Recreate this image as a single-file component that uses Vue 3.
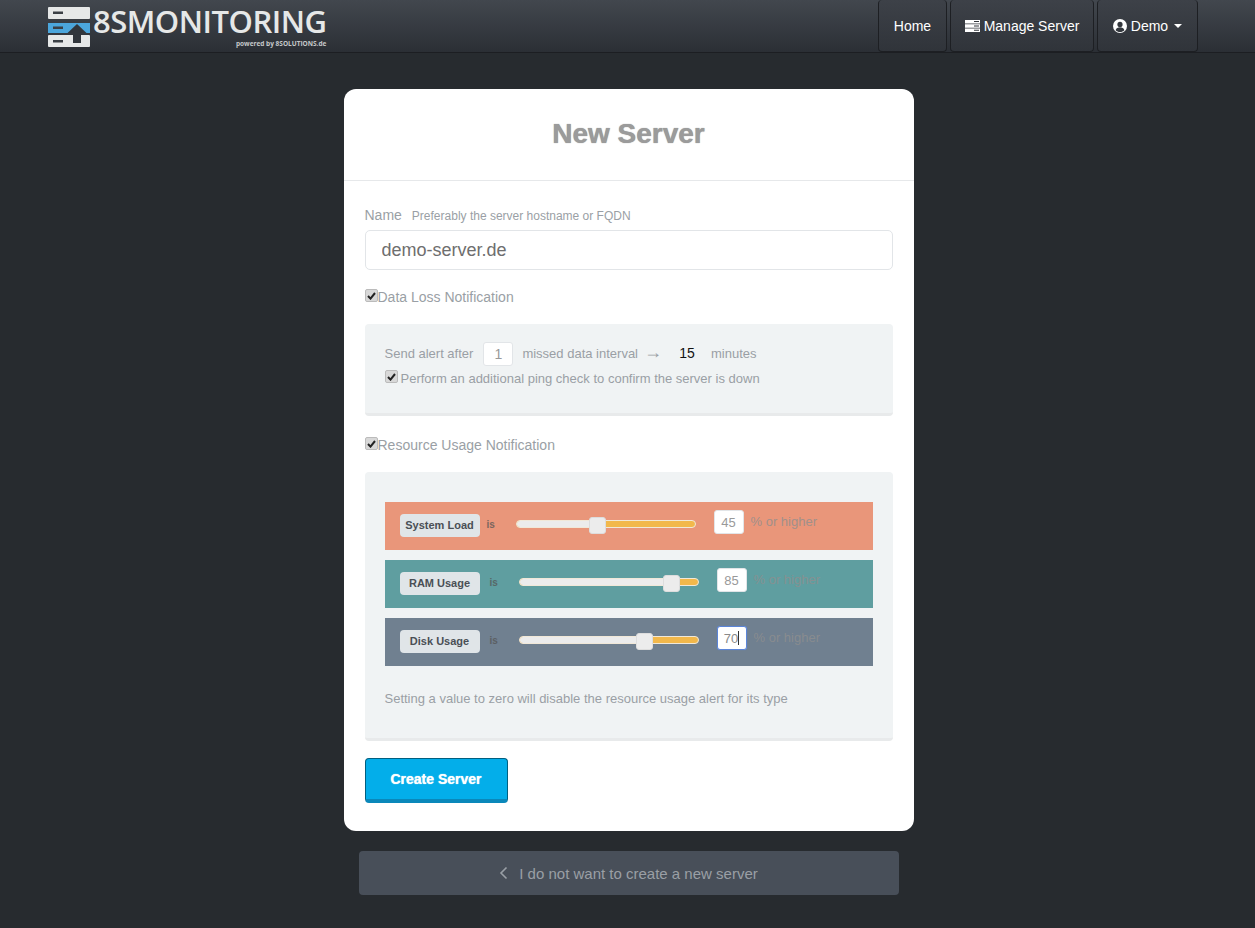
<template>
  <div class="page-root">
    <header class="site-header">
      <a href="#" class="brand">
        <svg class="brand-icon" width="43" height="41" viewBox="0 0 43 41">
          <rect x="0" y="0" width="42" height="12" rx="1" fill="#e6e8e8" />
          <rect x="5" y="4.500" width="10" height="2.500" fill="#3a3f45" />
          <rect x="0" y="16" width="42" height="10" fill="#4ba6dc" />
          <rect x="5" y="19.500" width="10" height="2.500" fill="#3a3f45" />
          <rect x="0" y="28" width="42" height="12" rx="1" fill="#e6e8e8" />
          <rect x="5" y="33" width="10" height="2.500" fill="#3a3f45" />
          <path d="M29 17 L38.500 26 H33 V36 H25 V26 H19.500 Z" fill="#31363c" />
        </svg>
        <span class="brand-text">
          <span class="brand-name">8SMONITORING</span>
          <span class="brand-sub">powered by 8SOLUTIONS.de</span>
        </span>
      </a>
      <nav class="primary-nav">
        <a href="#" class="nav-btn home">Home</a>
        <a href="#" class="nav-btn manage">
          <svg width="15" height="12" viewBox="0 0 15 12">
            <path fill="#fff" d="M0 0h15v3.400H0zM0 4.300h15v3.400H0zM0 8.600h15V12H0z" />
            <path fill="#33373d" d="M9 1h5v1H9zM9 5.500h5v1H9zM9 9.800h5v1H9z" />
          </svg>
          Manage Server
        </a>
        <a href="#" class="nav-btn demo">
          <svg width="14" height="14" viewBox="0 0 14 14">
            <circle cx="7" cy="7" r="7" fill="#fff" />
            <circle cx="7" cy="5.400" r="2.600" fill="#33373d" />
            <path fill="#33373d" d="M2.600 11.200c.7-2 2.300-2.900 4.400-2.900s3.700.9 4.400 2.900C10.300 12.300 8.800 13 7 13s-3.300-.7-4.400-1.800z" />
          </svg>
          Demo
          <span class="caret"></span>
        </a>
      </nav>
    </header>

    <main class="content">
      <section class="card">
        <h1 class="card-title">New Server</h1>
        <form class="card-form" @submit.prevent>
          <div class="name-label">
            <label>Name</label>
            <small>Preferably the server hostname or FQDN</small>
          </div>
          <input class="name-input" type="text" v-model="name" />

          <label class="check-line first-check">
            <span class="check"><svg width="9" height="8" viewBox="0 0 9 8"><path d="M1 4l2.500 2.600L8 1" fill="none" stroke="#222" stroke-width="2" /></svg></span>Data Loss Notification
          </label>

          <div class="panel loss-panel">
            <div class="alert-line">
              <span class="lift">Send alert after</span>
              <span class="num-box">1</span>
              <span class="lift">missed data interval</span>
              <span class="arrow">→</span>
              <span class="interval lift">15</span>
              <span class="minutes lift">minutes</span>
            </div>
            <label class="ping-line">
              <span class="check"><svg width="9" height="8" viewBox="0 0 9 8"><path d="M1 4l2.500 2.600L8 1" fill="none" stroke="#222" stroke-width="2" /></svg></span>
              Perform an additional ping check to confirm the server is down
            </label>
          </div>

          <label class="check-line second-check">
            <span class="check"><svg width="9" height="8" viewBox="0 0 9 8"><path d="M1 4l2.500 2.600L8 1" fill="none" stroke="#222" stroke-width="2" /></svg></span>Resource Usage Notification
          </label>

          <div class="panel usage-panel">
            <div v-for="row in rows" :key="row.label" class="usage-row" :class="row.cls">
              <span class="usage-label">{{ row.label }}</span>
              <span class="usage-is">is</span>
              <div class="slider">
                <div class="slider-fill" :style="{ width: row.pos + 'px' }"></div>
                <div class="slider-thumb" :style="{ left: row.pos - 8 + 'px' }"></div>
              </div>
              <span class="num-box usage-num" :class="{ focused: row.focused }">{{ row.value }}<i v-if="row.focused" class="cursor"></i></span>
              <span class="usage-suffix">% or higher</span>
            </div>
            <p class="usage-note">Setting a value to zero will disable the resource usage alert for its type</p>
          </div>

          <button class="create-btn" type="submit">Create Server</button>
        </form>
      </section>

      <a href="#" class="back-link">
        <svg width="9" height="14" viewBox="0 0 9 14"><path d="M7.500 1.500L2 7l5.500 5.500" fill="none" stroke="#9aa0a6" stroke-width="1.600" /></svg>
        I do not want to create a new server
      </a>
    </main>
  </div>
</template>

<script setup>
import { ref } from 'vue'

const name = ref('demo-server.de')

const rows = [
  { label: 'System Load', value: 45, pos: 80, cls: 'salmon' },
  { label: 'RAM Usage', value: 85, pos: 151, cls: 'teal' },
  { label: 'Disk Usage', value: 70, pos: 124, cls: 'slate', focused: true }
]
</script>

<style>
body { margin: 0; background: #272b2f; }
</style>

<style scoped>
* { box-sizing: border-box; }

.page-root { min-height: 928px; background: #272b2f; font-family: "Liberation Sans", Arial, sans-serif; font-size: 14px; color: #9a9fa5; }

.site-header { display: flex; justify-content: space-between; height: 53px; padding: 0 57px 0 48px; background: linear-gradient(#42474e, #2b2f35); border-bottom: 1px solid #1c1e22; }
.brand { display: flex; align-items: flex-start; gap: 2px; padding-top: 7px; text-decoration: none; }
.brand-text { display: flex; flex-direction: column; align-items: flex-end; margin-top: -2px; }
.brand-name { font-family: "Open Sans", sans-serif; font-size: 31px; font-weight: 600; line-height: 32px; letter-spacing: -0.500px; color: #e6e8e8; }
.brand-sub { margin-top: 3px; font-family: "Open Sans", sans-serif; font-weight: 700; font-size: 6.500px; line-height: 8px; color: #c5c8ca; }

.primary-nav { display: flex; gap: 3px; }
.nav-btn { display: flex; align-items: center; justify-content: center; gap: 4px; height: 52px; border: 1px solid #1d1f23; border-top: 0; border-radius: 4px; background: linear-gradient(#3d4148, #30343a); color: #fff; text-decoration: none; }
.home { width: 69px; }
.manage { width: 144px; }
.demo { width: 101px; }
.caret { width: 0; height: 0; margin-left: 2px; border-top: 4px solid #fff; border-left: 4px solid transparent; border-right: 4px solid transparent; }

.content { display: flex; flex-direction: column; align-items: center; padding: 36px 0 0 2px; }
.card { width: 570px; height: 742px; background: #fff; border-radius: 12px; }
.card-title { height: 92px; margin: 0; border-bottom: 1px solid #e6e8ea; text-align: center; font-size: 28px; line-height: 90px; font-weight: 700; color: #9b9b9b; text-shadow: 0 0 1px #8a8a8a; }
.card-form { padding: 0 21px; }

.name-label { display: flex; align-items: baseline; gap: 10px; padding-top: 26px; line-height: 17px; }
.name-label small { font-size: 12px; }
.name-input { display: block; width: 100%; height: 40px; margin-top: 5px; padding: 0 16px; border: 1px solid #e2e5e8; border-radius: 5px; font: 18px "Liberation Sans", Arial, sans-serif; color: #6e6e6e; outline: none; }

.check-line { display: flex; align-items: flex-start; line-height: 20px; }
.first-check { margin-top: 17px; }
.second-check { margin-top: 19px; }
.check { display: flex; align-items: center; justify-content: center; width: 13px; height: 13px; border: 1px solid #bbb; border-radius: 2px; background: #d8d8d8; flex: none; }
.check-line .check { margin-top: 2px; }

.panel { background: #f0f3f4; border-bottom: 3px solid #e8eaeb; border-radius: 4px; font-size: 13px; }
.loss-panel { height: 92px; margin-top: 17px; padding: 18px 20px 0; }
.alert-line { display: flex; align-items: center; height: 24px; }
.lift { margin-bottom: 2px; }
.num-box { display: flex; align-items: center; justify-content: center; width: 30px; height: 24px; border: 1px solid #e2e5e8; border-radius: 3px; background: #fff; color: #999; font-size: 14px; }
.alert-line .num-box { margin: 0 9px 0 10px; }
.arrow { margin: 0 0 4px 6px; font-size: 18px; }
.interval { width: 40px; margin-left: 5px; text-align: center; font-size: 14px; color: #111; }
.minutes { margin-left: 4px; }
.ping-line { display: flex; align-items: center; gap: 3px; height: 24px; }
.ping-line .check { margin-top: -3px; }

.usage-panel { height: 269px; margin-top: 17px; padding: 30px 20px 0; }
.usage-row { display: flex; align-items: flex-start; height: 48px; margin-bottom: 10px; padding: 12px 0 0 15px; }
.salmon { background: #e9967a; --is-gap: 7px; --after-is: 22px; }
.teal { background: #5f9ea0; --is-gap: 10px; --after-is: 22px; }
.slate { background: #708090; --is-gap: 10px; --after-is: 22px; }
.usage-label { width: 80px; height: 23px; border-radius: 4px; background: #e0e5e8; text-align: center; font-size: 11px; font-weight: 700; line-height: 23px; color: #4a4f55; }
.usage-is { width: 7px; margin-left: var(--is-gap); margin-top: 5px; font-size: 10px; font-weight: 700; color: #555; opacity: .75; }
.slider { position: relative; width: 180px; height: 8px; margin-left: var(--after-is); margin-top: 6px; border: 1px solid #f1e8d8; border-radius: 4px; background: #f2b84b; }
.slider-fill { height: 6px; border-radius: 3px 0 0 3px; background: #ececec; }
.slider-thumb { position: absolute; top: -4px; width: 17px; height: 17px; border: 1px solid #ddd; border-radius: 3px; background: #ececec; }
.usage-num { width: 30px; height: 24px; margin-left: 18px; margin-top: -4px; font-size: 13px; }
.focused { border: 1px solid #5b85d8; box-shadow: 0 0 1px #5b85d8; color: #8a8a8a; }
.cursor { width: 1px; height: 14px; background: #333; }
.usage-suffix { margin-left: 7px; margin-top: 0; color: #8f8f8f; line-height: 16px; opacity: .8; }
.usage-note { margin: 25px 0 0; }

.create-btn { display: block; width: 143px; height: 45px; margin-top: 17px; border: 1px solid #015f80; border-bottom: 4px solid #0a88ba; border-radius: 4px; background: #03aeea; font: 700 14px "Liberation Sans", Arial, sans-serif; color: #fff; text-shadow: 0 0 1px #fff; }

.back-link { display: flex; align-items: center; justify-content: center; gap: 11px; width: 540px; height: 44px; margin-top: 20px; border-radius: 4px; background: #484f59; color: #9a9fa5; font-size: 15px; text-decoration: none; }
</style>
